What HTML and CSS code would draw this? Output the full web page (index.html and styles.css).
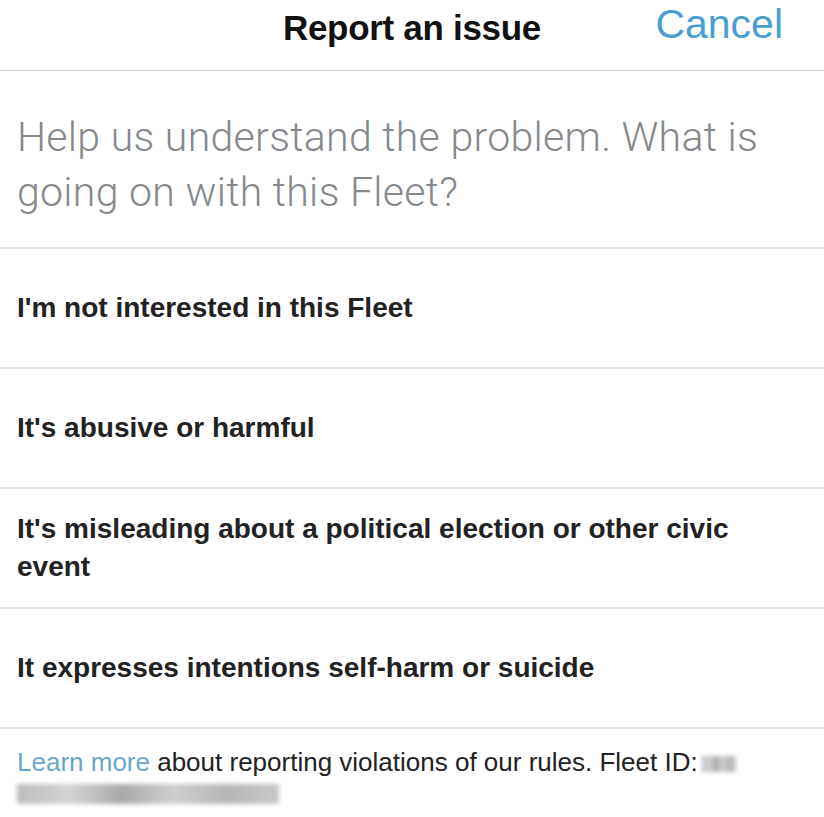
FILE: index.html
```html
<!DOCTYPE html>
<html>
<head>
<meta charset="utf-8">
<link rel="stylesheet" href="styles.css">
</head>
<body>
<div class="page">
  <header class="topbar">
    <div class="title">Report an issue</div>
    <div class="cancel">Cancel</div>
  </header>
  <div class="question">Help us understand the problem. What is going on with this Fleet?</div>
  <ul class="options">
    <li class="option">I'm not interested in this Fleet</li>
    <li class="option">It's abusive or harmful</li>
    <li class="option">It's misleading about a political election or other civic event</li>
    <li class="option">It expresses intentions self-harm or suicide</li>
  </ul>
  <div class="footer">
    <span class="link">Learn more</span> about reporting violations of our rules. Fleet ID:<span class="blur blur-a"></span>
    <div class="blur blur-b"></div>
  </div>
</div>
</body>
</html>
```
FILE: styles.css
```css
html, body {
  margin: 0;
  padding: 0;
  background: #ffffff;
}
.page {
  width: 824px;
  height: 817px;
  overflow: hidden;
  font-family: "Liberation Sans", Arial, sans-serif;
}
.topbar {
  height: 70px;
  border-bottom: 1px solid #c8c8c8;
  display: grid;
  grid-template-columns: 1fr auto 1fr;
  align-items: center;
}
.title {
  grid-column: 2;
  font-size: 35px;
  font-weight: 700;
  color: #111111;
  letter-spacing: -0.3px;
  padding-bottom: 14px;
}
.cancel {
  grid-column: 3;
  justify-self: end;
  margin-right: 41px;
  font-size: 41px;
  color: #4a9fd2;
  padding-bottom: 22px;
}
.question {
  padding: 39px 40px 27px 17px;
  font-family: Roboto, "Liberation Sans", sans-serif;
  font-weight: 300;
  font-size: 41px;
  line-height: 55px;
  letter-spacing: 0.3px;
  color: #85898d;
  border-bottom: 2px solid #e6e6e6;
}
.options {
  list-style: none;
  margin: 0;
  padding: 0;
}
.option {
  height: 120px;
  box-sizing: border-box;
  padding: 0 80px 0 17px;
  display: flex;
  align-items: center;
  font-size: 28px;
  font-weight: 700;
  line-height: 38px;
  color: #222222;
  border-bottom: 2px solid #e6e6e6;
}
.footer {
  padding: 15px 17px 0 17px;
  font-size: 26px;
  line-height: 36px;
  color: #222222;
}
.link {
  color: #6aa6cc;
}
.blur {
  background: linear-gradient(90deg, #bdbdbd 0%, #d4d4d4 20%, #a9a9a9 40%, #cfcfcf 60%, #b5b5b5 80%, #c9c9c9 100%);
  filter: blur(2px);
}
.blur-a {
  display: inline-block;
  width: 34px;
  height: 16px;
  margin-left: 4px;
  vertical-align: -1px;
}
.blur-b {
  width: 262px;
  height: 20px;
  margin-top: 4px;
}
```
